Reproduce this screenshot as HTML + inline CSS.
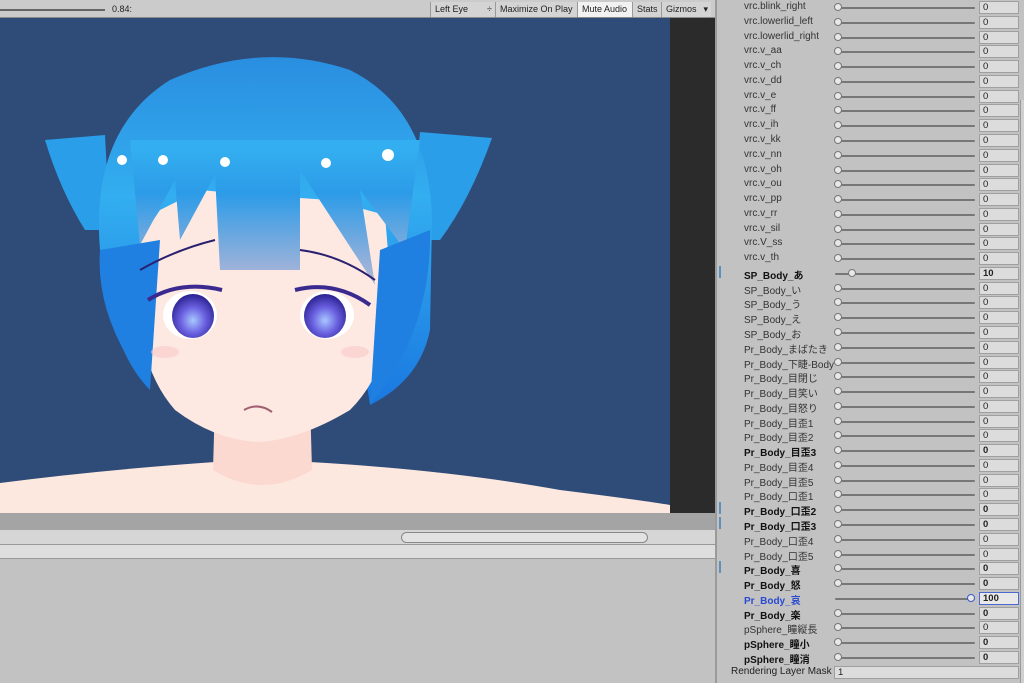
<!DOCTYPE html>
<html><head><meta charset="utf-8"><style>
*{margin:0;padding:0;box-sizing:border-box}
body{width:1024px;height:683px;overflow:hidden;background:#c2c2c2;position:relative;font-family:"Liberation Sans","Noto Sans CJK JP",sans-serif;font-size:10px;color:#222}
.a{position:absolute}
.tb{left:0;top:0;width:716px;height:18px;background:#cbcbcb;border-bottom:1px solid #8a8a8a}
.btn{position:absolute;top:2px;height:15px;line-height:15px;font-size:9px;padding-left:4px;border-left:1px solid #999;background:#d4d4d4}
.insp{left:715px;top:0;width:309px;height:683px;background:#c2c2c2;border-left:2px solid #9a9a9a}
.r{position:absolute;left:0;width:309px;height:15px}
.r .l{position:absolute;left:27px;top:1px;font-size:10px;color:#333;white-space:nowrap}
.r.b .l{font-weight:bold;color:#111}
.r .s{position:absolute;left:118px;top:7px;width:140px;height:2px;background:#777;border-radius:1px}
.r .k{position:absolute;left:117px;top:3px;width:8px;height:8px;border-radius:50%;background:#e8e8e8;border:1px solid #777}
.r .v{position:absolute;left:262px;top:1px;width:40px;height:13px;background:#dcdcdc;border:1px solid #9f9f9f;font-size:9.5px;padding-left:3px;line-height:11px}
.r.b .v{font-weight:bold}
.m{position:absolute;left:2px;width:2px;height:12px;background:#5a8fc0}
</style></head><body>
<div class="a tb">
<div class="a" style="left:0;top:9px;width:105px;height:2px;background:#666"></div>
<div class="a" style="left:112px;top:4px;font-size:9px">0.84:</div>
<div class="btn" style="left:430px;width:65px">Left Eye <span style="float:right;padding-right:3px">÷</span></div>
<div class="btn" style="left:495px;width:82px">Maximize On Play</div>
<div class="btn" style="left:577px;width:55px;background:#f2f2f2">Mute Audio</div>
<div class="btn" style="left:632px;width:29px">Stats</div>
<div class="btn" style="left:661px;width:50px">Gizmos <span style="float:right;padding-right:3px">▾</span></div>
</div>
<div class="a" style="left:0;top:18px;width:670px;height:495px;background:#2f4b78;overflow:hidden">
<svg width="670" height="495" viewBox="0 18 670 495" style="display:block">
<defs>
<linearGradient id="h" x1="0" y1="0" x2="0" y2="1"><stop offset="0" stop-color="#2a8ee0"/><stop offset=".4" stop-color="#33aef0"/><stop offset="1" stop-color="#1a78e0"/></linearGradient>
<linearGradient id="bg" gradientUnits="userSpaceOnUse" x1="0" y1="150" x2="0" y2="275"><stop offset="0" stop-color="#33aef0"/><stop offset=".35" stop-color="#2c9be8"/><stop offset="1" stop-color="#a6b4d8"/></linearGradient>
<radialGradient id="ir" cx=".5" cy=".6" r=".6"><stop offset="0" stop-color="#a8c8ff"/><stop offset=".5" stop-color="#6a60e0"/><stop offset="1" stop-color="#2a2090"/></radialGradient>
</defs>
<path d="M0 483 Q100 470 215 462 L310 462 Q450 470 560 490 Q640 500 670 505 L670 513 L0 513Z" fill="#fde8e0"/>
<path d="M215 400 L310 400 L312 470 Q262 500 213 470Z" fill="#fbd8d0"/>
<path d="M45 140 L105 135 L110 230 L85 230 Q60 190 45 140Z" fill="#2a9ee8"/>
<path d="M492 138 L420 132 L410 240 L440 240 Q470 200 492 138Z" fill="#2a9ee8"/>
<path d="M100 250 Q90 130 170 80 Q260 40 350 70 Q430 110 432 220 L430 330 Q420 380 370 405 L360 340 L150 340 L150 390 Q110 350 100 250Z" fill="url(#h)"/>
<path d="M140 240 L160 210 L200 190 L255 195 L330 200 L385 215 L392 300 Q390 370 350 410 Q300 440 258 442 Q215 440 175 410 Q140 370 138 300Z" fill="#fde9e2"/>
<path d="M130 140 L420 140 L405 250 L360 190 L375 285 L300 170 L300 270 L280 270 L220 270 L215 175 L180 240 L175 180 L140 245Z" fill="url(#bg)"/>
<path d="M100 250 Q95 320 150 390 L160 240Z" fill="#1f80e2"/>
<path d="M430 230 Q432 330 370 405 L380 250Z" fill="#1f80e2"/>
<ellipse cx="190" cy="315" rx="27" ry="24" fill="#fff"/><ellipse cx="193" cy="316" rx="21" ry="22" fill="url(#ir)"/>
<ellipse cx="327" cy="315" rx="27" ry="24" fill="#fff"/><ellipse cx="325" cy="316" rx="21" ry="22" fill="url(#ir)"/>
<path d="M148 300 Q180 280 222 290" stroke="#3a2a90" stroke-width="4" fill="none"/>
<path d="M295 290 Q335 280 370 305" stroke="#3a2a90" stroke-width="4" fill="none"/>
<path d="M140 270 Q175 250 215 240" stroke="#2a2070" stroke-width="2" fill="none"/>
<path d="M300 250 Q340 255 375 280" stroke="#2a2070" stroke-width="2" fill="none"/>
<ellipse cx="165" cy="352" rx="14" ry="6" fill="#f8c8c8" opacity=".6"/><ellipse cx="355" cy="352" rx="14" ry="6" fill="#f8c8c8" opacity=".6"/>
<path d="M244 410 Q258 402 272 412" stroke="#a06070" stroke-width="2" fill="none"/>
<circle cx="122" cy="160" r="5" fill="#fff"/><circle cx="163" cy="160" r="5" fill="#fff"/><circle cx="225" cy="162" r="5" fill="#fff"/><circle cx="326" cy="163" r="5" fill="#fff"/><circle cx="388" cy="155" r="6" fill="#fff"/>
</svg></div>
<div class="a" style="left:670px;top:18px;width:46px;height:495px;background:#2b2b2b"></div>
<div class="a" style="left:0;top:513px;width:716px;height:17px;background:#a4a4a4"></div>
<div class="a" style="left:0;top:530px;width:716px;height:15px;background:#d6d6d6;border-bottom:1px solid #999"></div>
<div class="a" style="left:401px;top:532px;width:247px;height:11px;border:1px solid #888;border-radius:6px;background:#e2e2e2"></div>
<div class="a" style="left:0;top:545px;width:716px;height:14px;background:#dedede;border-bottom:1px solid #999"></div>
<div class="a insp">
<div class="r" style="top:0"><span class="l">vrc.blink_right</span><i class="s"></i><i class="k"></i><span class="v">0</span></div>
<div class="r" style="top:14.8px"><span class="l">vrc.lowerlid_left</span><i class="s"></i><i class="k"></i><span class="v">0</span></div>
<div class="r" style="top:29.5px"><span class="l">vrc.lowerlid_right</span><i class="s"></i><i class="k"></i><span class="v">0</span></div>
<div class="r" style="top:44.3px"><span class="l">vrc.v_aa</span><i class="s"></i><i class="k"></i><span class="v">0</span></div>
<div class="r" style="top:59.1px"><span class="l">vrc.v_ch</span><i class="s"></i><i class="k"></i><span class="v">0</span></div>
<div class="r" style="top:73.9px"><span class="l">vrc.v_dd</span><i class="s"></i><i class="k"></i><span class="v">0</span></div>
<div class="r" style="top:88.6px"><span class="l">vrc.v_e</span><i class="s"></i><i class="k"></i><span class="v">0</span></div>
<div class="r" style="top:103.4px"><span class="l">vrc.v_ff</span><i class="s"></i><i class="k"></i><span class="v">0</span></div>
<div class="r" style="top:118.2px"><span class="l">vrc.v_ih</span><i class="s"></i><i class="k"></i><span class="v">0</span></div>
<div class="r" style="top:132.9px"><span class="l">vrc.v_kk</span><i class="s"></i><i class="k"></i><span class="v">0</span></div>
<div class="r" style="top:147.7px"><span class="l">vrc.v_nn</span><i class="s"></i><i class="k"></i><span class="v">0</span></div>
<div class="r" style="top:162.5px"><span class="l">vrc.v_oh</span><i class="s"></i><i class="k"></i><span class="v">0</span></div>
<div class="r" style="top:177.2px"><span class="l">vrc.v_ou</span><i class="s"></i><i class="k"></i><span class="v">0</span></div>
<div class="r" style="top:192px"><span class="l">vrc.v_pp</span><i class="s"></i><i class="k"></i><span class="v">0</span></div>
<div class="r" style="top:206.8px"><span class="l">vrc.v_rr</span><i class="s"></i><i class="k"></i><span class="v">0</span></div>
<div class="r" style="top:221.6px"><span class="l">vrc.v_sil</span><i class="s"></i><i class="k"></i><span class="v">0</span></div>
<div class="r" style="top:236.3px"><span class="l">vrc.V_ss</span><i class="s"></i><i class="k"></i><span class="v">0</span></div>
<div class="r" style="top:251.1px"><span class="l">vrc.v_th</span><i class="s"></i><i class="k"></i><span class="v">0</span></div>
<div class="r b" style="top:265.9px"><i class="m"></i><span class="l">SP_Body_あ</span><i class="s"></i><i class="k" style="left:131px"></i><span class="v">10</span></div>
<div class="r" style="top:280.6px"><span class="l">SP_Body_い</span><i class="s"></i><i class="k"></i><span class="v">0</span></div>
<div class="r" style="top:295.4px"><span class="l">SP_Body_う</span><i class="s"></i><i class="k"></i><span class="v">0</span></div>
<div class="r" style="top:310.2px"><span class="l">SP_Body_え</span><i class="s"></i><i class="k"></i><span class="v">0</span></div>
<div class="r" style="top:325px"><span class="l">SP_Body_お</span><i class="s"></i><i class="k"></i><span class="v">0</span></div>
<div class="r" style="top:339.7px"><span class="l">Pr_Body_まばたき</span><i class="s"></i><i class="k"></i><span class="v">0</span></div>
<div class="r" style="top:354.5px"><span class="l">Pr_Body_下睫-Body</span><i class="s"></i><i class="k"></i><span class="v">0</span></div>
<div class="r" style="top:369.3px"><span class="l">Pr_Body_目閉じ</span><i class="s"></i><i class="k"></i><span class="v">0</span></div>
<div class="r" style="top:384px"><span class="l">Pr_Body_目笑い</span><i class="s"></i><i class="k"></i><span class="v">0</span></div>
<div class="r" style="top:398.8px"><span class="l">Pr_Body_目怒り</span><i class="s"></i><i class="k"></i><span class="v">0</span></div>
<div class="r" style="top:413.6px"><span class="l">Pr_Body_目歪1</span><i class="s"></i><i class="k"></i><span class="v">0</span></div>
<div class="r" style="top:428.3px"><span class="l">Pr_Body_目歪2</span><i class="s"></i><i class="k"></i><span class="v">0</span></div>
<div class="r b" style="top:443.1px"><span class="l">Pr_Body_目歪3</span><i class="s"></i><i class="k"></i><span class="v">0</span></div>
<div class="r" style="top:457.9px"><span class="l">Pr_Body_目歪4</span><i class="s"></i><i class="k"></i><span class="v">0</span></div>
<div class="r" style="top:472.6px"><span class="l">Pr_Body_目歪5</span><i class="s"></i><i class="k"></i><span class="v">0</span></div>
<div class="r" style="top:487.4px"><span class="l">Pr_Body_口歪1</span><i class="s"></i><i class="k"></i><span class="v">0</span></div>
<div class="r b" style="top:502.2px"><i class="m"></i><span class="l">Pr_Body_口歪2</span><i class="s"></i><i class="k"></i><span class="v">0</span></div>
<div class="r b" style="top:517px"><i class="m"></i><span class="l">Pr_Body_口歪3</span><i class="s"></i><i class="k"></i><span class="v">0</span></div>
<div class="r" style="top:531.7px"><span class="l">Pr_Body_口歪4</span><i class="s"></i><i class="k"></i><span class="v">0</span></div>
<div class="r" style="top:546.5px"><span class="l">Pr_Body_口歪5</span><i class="s"></i><i class="k"></i><span class="v">0</span></div>
<div class="r b" style="top:561.3px"><i class="m"></i><span class="l">Pr_Body_喜</span><i class="s"></i><i class="k"></i><span class="v">0</span></div>
<div class="r b" style="top:576px"><span class="l">Pr_Body_怒</span><i class="s"></i><i class="k"></i><span class="v">0</span></div>
<div class="r b" style="top:590.8px"><span class="l" style="color:#2a4ad0">Pr_Body_哀</span><i class="s"></i><i class="k" style="left:250px;border-color:#3a5ad0"></i><span class="v" style="background:#e8e8e8;border-color:#4a6ad0">100</span></div>
<div class="r b" style="top:605.6px"><span class="l">Pr_Body_楽</span><i class="s"></i><i class="k"></i><span class="v">0</span></div>
<div class="r" style="top:620.3px"><span class="l">pSphere_瞳縦長</span><i class="s"></i><i class="k"></i><span class="v">0</span></div>
<div class="r b" style="top:635.1px"><span class="l">pSphere_瞳小</span><i class="s"></i><i class="k"></i><span class="v">0</span></div>
<div class="r b" style="top:649.9px"><span class="l">pSphere_瞳消</span><i class="s"></i><i class="k"></i><span class="v">0</span></div>
<div class="r" style="top:664.6px"><span class="l" style="left:14px;color:#222">Rendering Layer Mask</span><span class="v" style="left:117px;width:185px">1</span></div>
<div class="a" style="left:303px;top:100px;width:4px;height:583px;background:#d0d0d0;border-left:1px solid #999"></div>
</div>
</body></html>
